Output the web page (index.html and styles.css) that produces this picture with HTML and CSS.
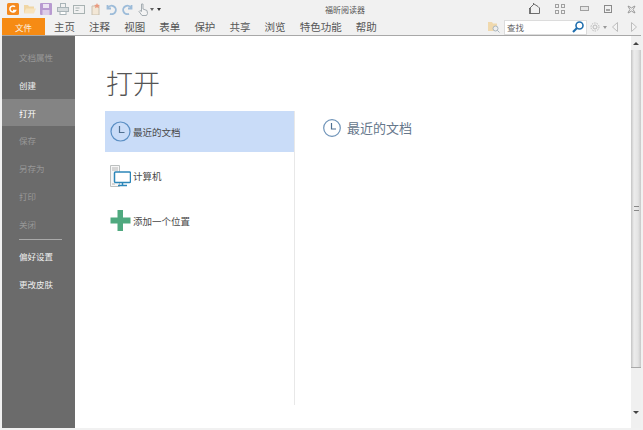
FILE: index.html
```html
<!DOCTYPE html>
<html lang="zh-CN">
<head>
    <meta charset="UTF-8">
    <meta name="viewport" content="width=device-width, initial-scale=1.0">
    <title>福昕阅读器</title>
    <link rel="stylesheet" href="styles.css">
</head>
<body>
    <div class="window">
        <div class="titlebar">
            <div class="quick-icons">
                <svg width="12" height="12" viewBox="0 0 12 12"><rect width="12" height="12" rx="1.500" fill="#f58a1f"/><path d="M8 3.800A3 3 0 1 0 8.500 7.500H6" fill="none" stroke="#fff" stroke-width="1.500"/></svg>
                <svg width="12" height="12" viewBox="0 0 12 12"><path d="M0 2h4l1 1.500h5V10H0z" fill="#f0d6a4"/><path d="M2 5.500h10L10 10.500H0z" fill="#f7e4bf"/></svg>
                <svg width="12" height="12" viewBox="0 0 12 12"><rect width="12" height="12" rx="1" fill="#b89ad0"/><rect x="3" y="1" width="6" height="4" fill="#ece4f2"/><rect x="2.500" y="7" width="7" height="5" fill="#dccde8"/></svg>
                <svg width="12" height="12" viewBox="0 0 12 12" fill="none" stroke="#a9b4b8"><rect x="3.500" y=".5" width="5" height="4"/><rect x=".5" y="4.500" width="11" height="4" fill="#d5dadc"/><rect x="3" y="8.500" width="6" height="3" fill="#fff"/></svg>
                <svg width="12" height="12" viewBox="0 0 12 12" fill="none" stroke="#a8b2b2"><rect x=".5" y="2.500" width="11" height="8"/><path d="M2.500 5h4M2.500 7.500h3"/></svg>
                <svg width="11" height="12" viewBox="0 0 11 12"><path d="M2 3h7v9H2z" fill="#f3e7d6" stroke="#c9c0b0"/><path d="M7 0l.8 1.800L10 2l-1.500 1.300.5 2-2-1-2 1 .5-2L4 2l2.200-.2z" fill="#ea9a7f"/></svg>
                <svg width="12" height="12" viewBox="0 0 12 12" fill="none" stroke="#9dbcd9" stroke-width="1.800"><path d="M2.500 2v3.500H6"/><path d="M2.800 5.200A4.200 4.200 0 1 1 5 10.800"/></svg>
                <svg width="12" height="12" viewBox="0 0 12 12" fill="none" stroke="#9dbcd9" stroke-width="1.800"><path d="M9.500 2v3.500H6"/><path d="M9.200 5.200A4.200 4.200 0 1 0 7 10.800"/></svg>
                <svg width="11" height="13" viewBox="0 0 11 13" fill="#f4f4f4" stroke="#a5adb2"><path d="M3.500 1h1.500v5l4 1.500.5 3-1 2H4L1 8.500l1-1 1.500 1z"/></svg>
                <span class="caret small"></span>
                <span class="caret bar"></span>
            </div>
            <div class="app-title">福昕阅读器</div>
            <div class="win-icons">
                <svg width="11" height="12" viewBox="0 0 11 12" fill="none" stroke="#6d6d6d"><path d="M.5 5.500l4.500-4.500 4 2.500 1.500 1.500v5.500H1.500"/><path d="M4.500 1V0"/><path d="M1 5v6" stroke="#444" stroke-width="1.400"/></svg>
                <svg width="10" height="10" viewBox="0 0 10 10" fill="none" stroke="#a0a0a0"><rect x=".5" y=".5" width="3" height="3"/><rect x="6.500" y=".5" width="3" height="3"/><rect x=".5" y="6.500" width="3" height="3"/><rect x="6.500" y="6.500" width="3" height="3"/></svg>
                <svg width="9" height="6" viewBox="0 0 9 6" fill="#e6e6e6" stroke="#a0a0a0"><rect x=".5" y=".5" width="8" height="4"/></svg>
                <svg width="8" height="8" viewBox="0 0 8 8" fill="none" stroke="#8a8a8a"><rect x=".5" y=".5" width="7" height="7"/><path d="M2 4h4v2H2z" fill="#a5a5a5" stroke="none"/></svg>
                <svg width="9" height="9" viewBox="0 0 9 9" fill="none" stroke="#9a9a9a"><path d="M1 1l2 1 1.500 1L6 2l2-1-1 2-1 1.500L7 6l1 2-2-1-1.500-1L3 7 1 8l1-2 1-1.500L2 3z"/></svg>
            </div>
        </div>
        <div class="menubar">
            <div class="tab-file">文件</div>
            <nav class="tabs">
                <span>主页</span><span>注释</span><span>视图</span><span>表单</span><span>保护</span><span>共享</span><span>浏览</span><span>特色功能</span><span>帮助</span>
            </nav>
            <div class="search-tools">
                <svg width="12" height="12" viewBox="0 0 12 12"><path d="M0 1h4l1 1.500h4V10H0z" fill="#f0d9ae"/><circle cx="7.500" cy="7.500" r="2.500" fill="#eee" stroke="#a9b6bf"/><path d="M9.300 9.300L11.500 11.500" stroke="#a9b6bf"/></svg>
                <div class="search-box">
                    <span>查找</span>
                    <svg width="12" height="12" viewBox="0 0 12 12" fill="none" stroke="#1f6eae" stroke-width="1.600"><circle cx="7.500" cy="4.500" r="3.500"/><path d="M5 7L1 11" stroke-width="2.200"/></svg>
                </div>
                <svg class="gear" width="10" height="10" viewBox="0 0 10 10" fill="none" stroke="#b9b9b9"><circle cx="5" cy="5" r="2"/><circle cx="5" cy="5" r="4" stroke-dasharray="1.500 1"/></svg>
                <span class="caret gear-caret"></span>
                <svg class="nav-prev" width="6" height="10" viewBox="0 0 6 10" fill="#f4f4f4" stroke="#bdbdbd"><path d="M5.500.5v9L.5 5z"/></svg>
                <svg class="nav-next" width="6" height="10" viewBox="0 0 6 10" fill="#f4f4f4" stroke="#bdbdbd"><path d="M.5.5v9l5-4.500z"/></svg>
            </div>
        </div>
        <div class="main">
            <aside class="sidebar">
                <div class="side-item off">文档属性</div>
                <div class="side-item">创建</div>
                <div class="side-item active">打开</div>
                <div class="side-item off">保存</div>
                <div class="side-item off">另存为</div>
                <div class="side-item off">打印</div>
                <div class="side-item off">关闭</div>
                <div class="side-line"></div>
                <div class="side-item">偏好设置</div>
                <div class="side-item">更改皮肤</div>
            </aside>
            <section class="content">
                <h1>打开</h1>
                <div class="columns">
                    <ul class="places">
                        <li class="place selected">
                            <svg width="21" height="21" viewBox="0 0 21 21" fill="none" stroke="#5b8fc4" stroke-width="1.200"><circle cx="10.500" cy="10.500" r="9.500"/><path d="M9.500 5v6.500h5" stroke="#4f6f90"/></svg>
                            最近的文档
                        </li>
                        <li class="place">
                            <svg width="21" height="22" viewBox="0 0 21 22" fill="none"><path d="M.5.500h9v21h-9z" stroke="#bcc0c0" fill="#f7f7f7"/><path d="M2 3h6M2 5h6M2 19h3" stroke="#b5b5b5"/><rect x="4.500" y="7" width="16" height="10.500" rx="1" fill="#fff" stroke="#2c86b9" stroke-width="1.500"/><path d="M12.500 17.500v3M8 20.500h9" stroke="#2c86b9" stroke-width="1.500"/></svg>
                            计算机
                        </li>
                        <li class="place">
                            <svg width="21" height="21" viewBox="0 0 21 21" fill="#4fa97f"><path d="M7.500 0h5.500v7.500h7.500v6H13V21H7.500v-7.500H.5v-6h7z"/></svg>
                            添加一个位置
                        </li>
                    </ul>
                    <div class="detail">
                        <div class="detail-head">
                            <svg width="18" height="18" viewBox="0 0 18 18" fill="none" stroke="#6e93b8" stroke-width="1.200"><circle cx="9" cy="9" r="8.300"/><path d="M8.500 4v6h4.500" stroke="#4d6f91"/></svg>
                            最近的文档
                        </div>
                    </div>
                </div>
            </section>
            <div class="scrollbar">
                <span class="arrow up"></span>
                <div class="thumb"><span class="grip"></span></div>
                <span class="arrow down"></span>
            </div>
        </div>
    </div>
</body>
</html>
```

FILE: styles.css
```css
* {
    box-sizing: border-box;
}

html, body {
    margin: 0;
    height: 100%;
}

body {
    font-family: "Noto Sans CJK SC", "Liberation Sans", sans-serif;
    background-color: #f1f1f1;
    overflow: hidden;
}

.window {
    display: flex;
    flex-direction: column;
    height: 430px;
    padding: 0 2px 2px;
}

/* title row */
.titlebar {
    display: flex;
    align-items: center;
    height: 18px;
    flex-shrink: 0;
}

.quick-icons {
    display: flex;
    align-items: center;
    gap: 4.500px;
    width: 323px;
    padding-left: 5px;
}

.quick-icons svg {
    flex-shrink: 0;
}

.caret {
    width: 0;
    height: 0;
    border-left: 2.500px solid transparent;
    border-right: 2.500px solid transparent;
    border-top: 3px solid #666;
}

.caret.small {
    margin-left: -4px;
}

.caret.bar {
    margin-left: -1px;
    border-top-color: #333;
}

.app-title {
    font-size: 8px;
    color: #555;
    width: 204px;
}

.win-icons {
    display: flex;
    align-items: center;
    gap: 15px;
}

/* tabs row */
.menubar {
    display: flex;
    height: 18px;
    flex-shrink: 0;
    border-bottom: 1px solid #a8a8a8;
}

.tab-file {
    width: 43px;
    background-color: #f68b14;
    color: #fdf3e2;
    font-size: 8.500px;
    line-height: 18px;
    text-align: center;
}

.tabs {
    display: flex;
    gap: 14.100px;
    padding-left: 9px;
    width: 443px;
    font-size: 10.500px;
    line-height: 18px;
    color: #555;
}

.search-tools {
    display: flex;
    align-items: center;
    height: 16px;
    margin-top: 1px;
}

.search-box {
    display: flex;
    align-items: center;
    justify-content: space-between;
    width: 83px;
    height: 15px;
    margin-left: 4px;
    padding: 0 2px;
    background-color: #fff;
    border: 1px solid #dcdcdc;
    font-size: 8.500px;
    color: #666;
}

.gear {
    margin-left: 3px;
}

.gear-caret {
    margin-left: 3px;
    border-top-color: #999;
}

.nav-prev {
    margin-left: 5px;
}

.nav-next {
    margin-left: 13px;
}

/* body of the window */
.main {
    display: flex;
    flex: 1;
    min-height: 0;
    background-color: #fff;
}

.sidebar {
    width: 73px;
    flex-shrink: 0;
    padding-top: 7px;
    background-color: #6b6b6b;
}

.side-item {
    height: 28px;
    padding-left: 17px;
    font-size: 8.500px;
    line-height: 28px;
    color: #f0f0f0;
}

.side-item.off {
    color: #989898;
}

.side-item.active {
    height: 27px;
    background-color: #848484;
    color: #fff;
}

.side-line {
    width: 43px;
    height: 1px;
    margin: 1px 0 2px 17px;
    background-color: #a9a9a9;
}

.content {
    flex: 1;
    min-width: 0;
    padding-top: 27px;
    padding-left: 30px;
}

h1 {
    margin: 0 0 0 1px;
    height: 48px;
    font-size: 27px;
    font-weight: 300;
    line-height: 40px;
    color: #555;
}

.columns {
    display: flex;
    height: 294px;
}

.places {
    width: 189px;
    margin: 0;
    padding: 0;
    list-style-type: none;
}

.place {
    display: flex;
    align-items: center;
    gap: 2px;
    height: 45px;
    padding-left: 5px;
    font-size: 9.500px;
    color: #484848;
}

.place.selected {
    height: 41px;
    margin-bottom: 1px;
    background-color: #c9dcf8;
}

.place svg {
    flex-shrink: 0;
}

.detail {
    flex: 1;
    border-left: 1px solid #e8e8e8;
    padding: 8px 0 0 28px;
}

.detail-head {
    display: flex;
    align-items: center;
    gap: 6px;
    height: 18px;
    font-size: 13px;
    line-height: 16px;
    color: #66778b;
}

/* scrollbar */
.scrollbar {
    display: flex;
    flex-direction: column;
    align-items: center;
    width: 10px;
    flex-shrink: 0;
    background-color: #f0f0f0;
}

.thumb {
    display: flex;
    align-items: center;
    justify-content: center;
    width: 10px;
    height: 318px;
    background: linear-gradient(to right, #c4c4c4, #ececec 30%, #e4e4e4 70%, #c8c8c8);
    border-bottom: 1px solid #a9a9a9;
}

.grip {
    width: 5px;
    height: 5px;
    border-top: 1px solid #888;
    border-bottom: 1px solid #888;
}

.arrow {
    width: 0;
    height: 0;
    border-left: 3px solid transparent;
    border-right: 3px solid transparent;
}

.arrow.up {
    margin: 6px 0 5px;
    border-bottom: 3px solid #444;
}

.arrow.down {
    margin: auto 0 14px;
    border-top: 3px solid #444;
}
```
